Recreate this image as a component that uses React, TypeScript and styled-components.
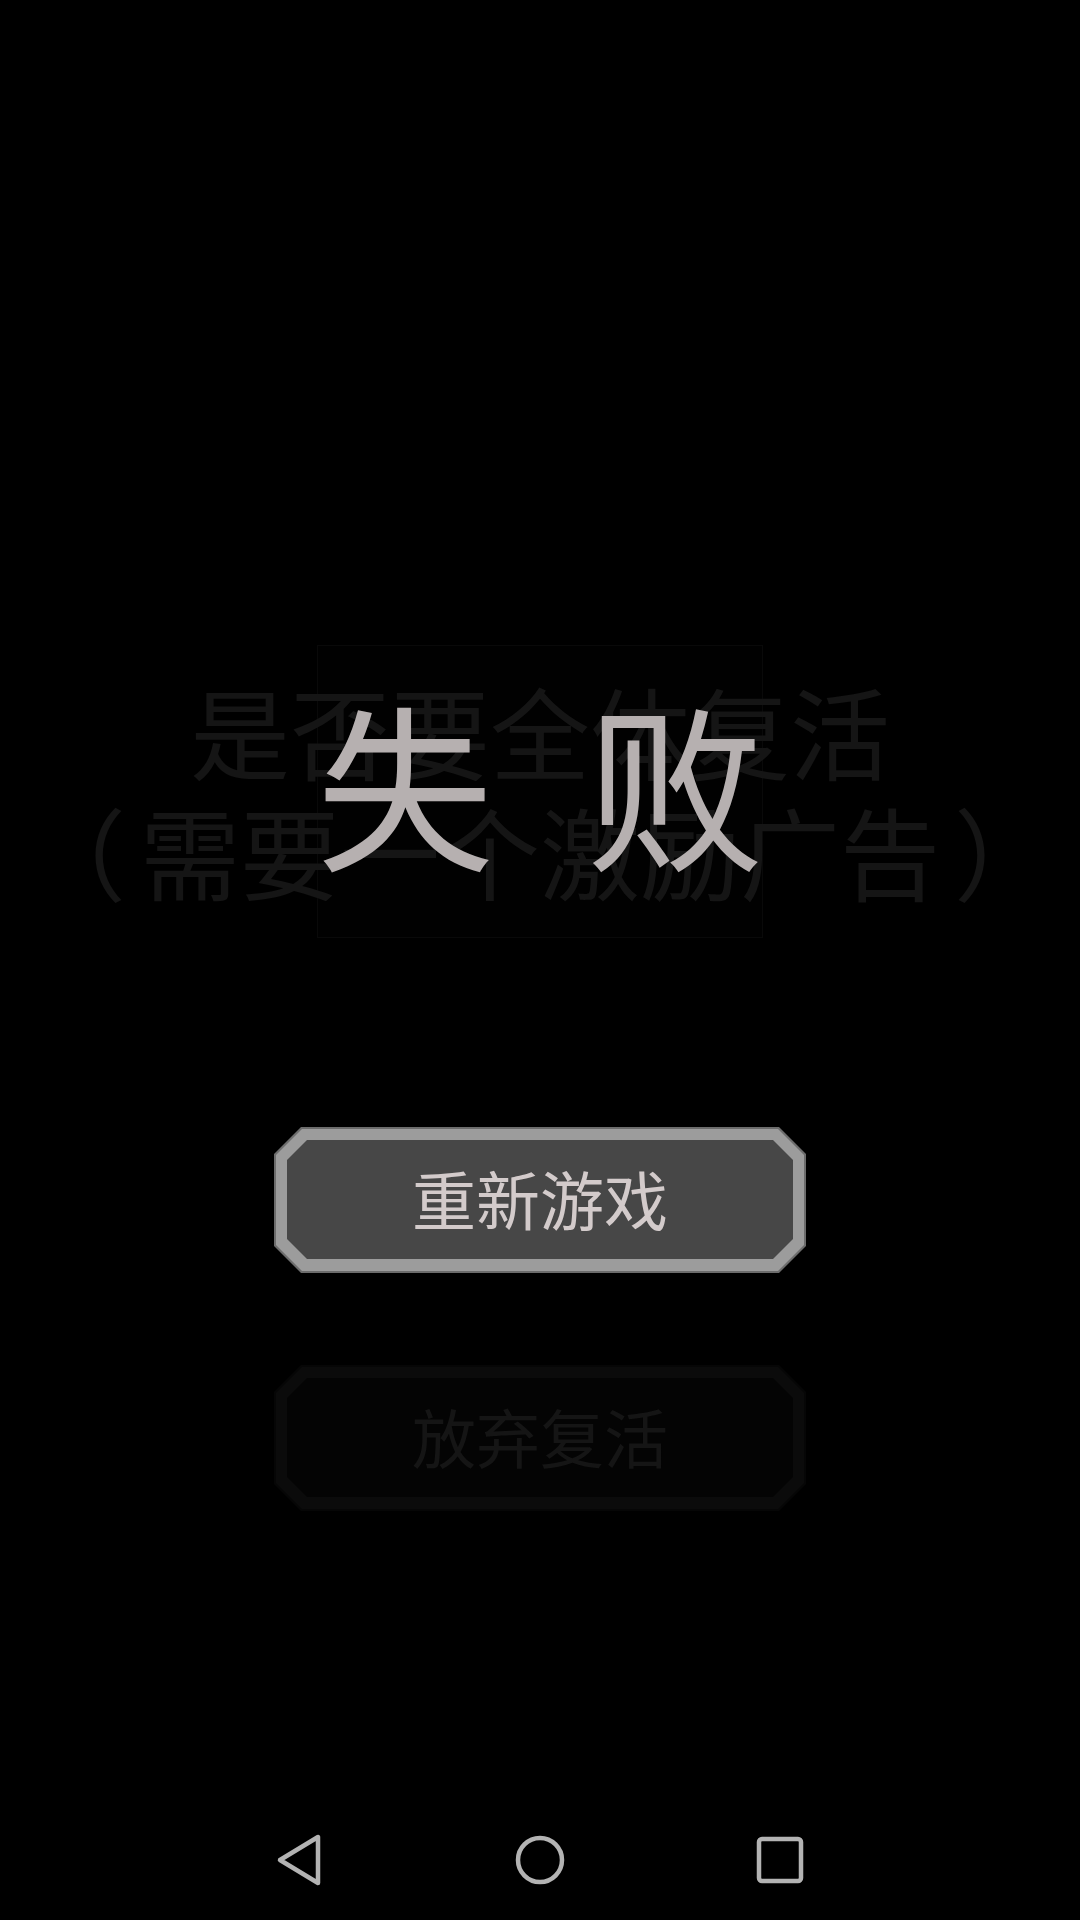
import styled, { createGlobalStyle } from "styled-components";

const GlobalStyle = createGlobalStyle`
  html, body {
    margin: 0;
    padding: 0;
    background: #000;
  }
  body {
    font-family: "Noto Sans CJK SC", "Noto Sans", sans-serif;
  }
`;

const Screen = styled.div`
  width: 1080px;
  height: 1920px;
  background: #000;
  display: flex;
  flex-direction: column;
  align-items: center;
  padding-top: 645px;
  box-sizing: border-box;
  overflow: hidden;
`;

const Stage = styled.div`
  display: grid;
  width: 100%;
  justify-items: center;
`;

const FaintPanel = styled.div`
  grid-area: 1 / 1;
  width: 446px;
  height: 293px;
  box-sizing: border-box;
  border: 1px solid #090909;
  background: #010101;
`;

const ReviveAsk = styled.div`
  grid-area: 1 / 1;
  align-self: start;
  margin-top: 25px;
  font-size: 100px;
  line-height: 120px;
  color: #151515;
  text-align: center;
  white-space: nowrap;
`;

const Paren = styled.span<{ $side: "open" | "close" }>`
  margin-left: ${(p) => (p.$side === "open" ? "-14px" : "14px")};
  margin-right: ${(p) => (p.$side === "open" ? "14px" : "-14px")};
`;

const TitleRow = styled.div`
  grid-area: 1 / 1;
  align-self: start;
  margin-top: 46px;
  display: flex;
  gap: 92px;
`;

const Title = styled.span`
  font-size: 178px;
  line-height: 180px;
  color: #b6b0b0;
`;

const Buttons = styled.div`
  display: flex;
  flex-direction: column;
  gap: 92px;
  margin-top: 189px;
`;

const Edge = styled.div<{ $dim?: boolean }>`
  --cut: 27px;
  width: 532px;
  height: 146px;
  box-sizing: border-box;
  padding: 2px;
  background: ${(p) => (p.$dim ? "#060606" : "#6c6c6c")};
  clip-path: polygon(
    var(--cut) 0, calc(100% - var(--cut)) 0, 100% var(--cut),
    100% calc(100% - var(--cut)), calc(100% - var(--cut)) 100%, var(--cut) 100%,
    0 calc(100% - var(--cut)), 0 var(--cut)
  );
`;

const Rim = styled.div<{ $dim?: boolean }>`
  --cut: 26px;
  height: 100%;
  box-sizing: border-box;
  padding: 11px 11px 12px;
  background: ${(p) => (p.$dim ? "#0b0b0b" : "#9c9c9c")};
  clip-path: polygon(
    var(--cut) 0, calc(100% - var(--cut)) 0, 100% var(--cut),
    100% calc(100% - var(--cut)), calc(100% - var(--cut)) 100%, var(--cut) 100%,
    0 calc(100% - var(--cut)), 0 var(--cut)
  );
`;

const Face = styled.div<{ $dim?: boolean }>`
  --cut: 20px;
  height: 100%;
  box-sizing: border-box;
  padding-bottom: 5px;
  display: flex;
  align-items: center;
  justify-content: center;
  background: ${(p) => (p.$dim ? "#040404" : "#474747")};
  color: ${(p) => (p.$dim ? "#151515" : "#d3cbcb")};
  font-size: 64px;
  line-height: 1;
  clip-path: polygon(
    var(--cut) 0, calc(100% - var(--cut)) 0, 100% var(--cut),
    100% calc(100% - var(--cut)), calc(100% - var(--cut)) 100%, var(--cut) 100%,
    0 calc(100% - var(--cut)), 0 var(--cut)
  );
`;

const NavBar = styled.div`
  margin-top: auto;
  height: 120px;
  display: flex;
  align-items: center;
  justify-content: center;
`;

const NavKey = styled.div`
  width: 240px;
  display: flex;
  justify-content: center;
  align-items: center;
`;

function GameButton({ label, dim }: { label: string; dim?: boolean }) {
  return (
    <Edge $dim={dim}>
      <Rim $dim={dim}>
        <Face $dim={dim}>{label}</Face>
      </Rim>
    </Edge>
  );
}

const navStroke = "#b3b3b3";

export default function App() {
  return (
    <>
      <GlobalStyle />
      <Screen>
        <Stage>
          <FaintPanel />
          <ReviveAsk>
            是否要全体复活
            <br />
            <Paren $side="open">（</Paren>需要一个激励广告<Paren $side="close">）</Paren>
          </ReviveAsk>
          <TitleRow>
            <Title>失</Title>
            <Title>败</Title>
          </TitleRow>
        </Stage>

        <Buttons>
          <GameButton label="重新游戏" />
          <GameButton label="放弃复活" dim />
        </Buttons>

        <NavBar>
          <NavKey>
            <svg width="50" height="54" viewBox="0 0 50 54">
              <path
                d="M43 4 L43 50 L5 27 Z"
                fill="none"
                stroke={navStroke}
                strokeWidth="4.5"
                strokeLinejoin="round"
              />
            </svg>
          </NavKey>
          <NavKey>
            <svg width="52" height="52" viewBox="0 0 52 52">
              <circle cx="26" cy="26" r="22" fill="none" stroke={navStroke} strokeWidth="4.5" />
            </svg>
          </NavKey>
          <NavKey>
            <svg width="50" height="50" viewBox="0 0 50 50">
              <rect x="4" y="4" width="42" height="42" rx="3" fill="none" stroke={navStroke} strokeWidth="4.5" />
            </svg>
          </NavKey>
        </NavBar>
      </Screen>
    </>
  );
}
